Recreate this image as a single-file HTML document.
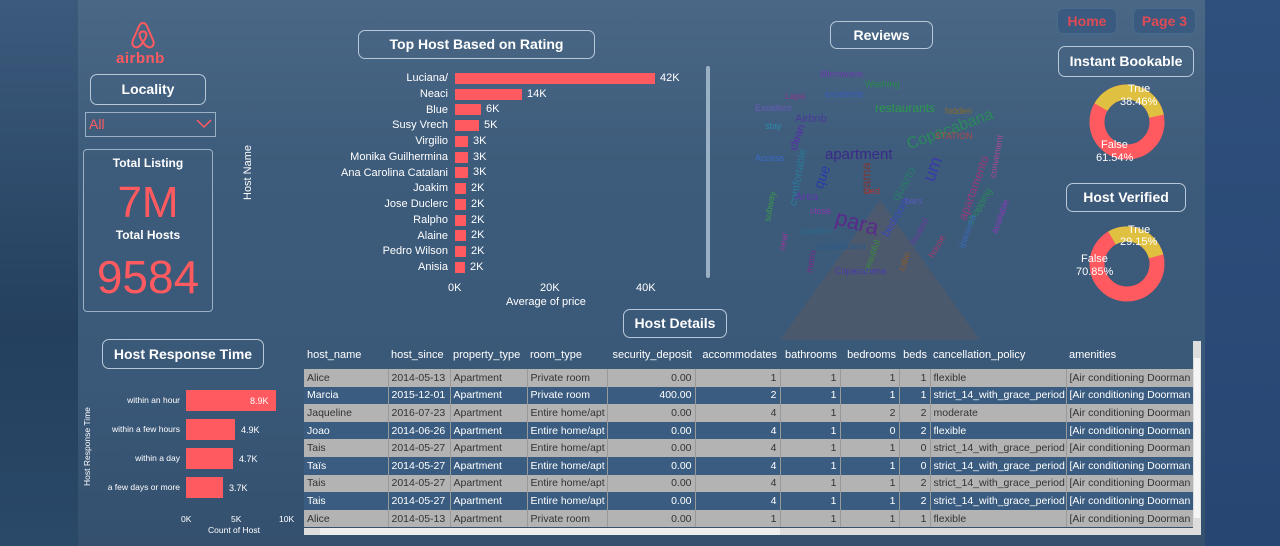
<!DOCTYPE html>
<html><head><meta charset="utf-8"><style>
*{margin:0;padding:0;box-sizing:border-box}
body{width:1280px;height:546px;overflow:hidden;font-family:"Liberation Sans",sans-serif;background:#2c4a70;position:relative;color:#fff}
.a{position:absolute}
.btn{position:absolute;border:1px solid #b8c8d8;border-radius:7px;font-weight:bold;text-align:center;color:#fff}
.red{color:#ff5a5f}
table{border-collapse:collapse;font-size:10.5px}
td{height:17.6px;padding:0 3px;border-right:1px solid #999;white-space:nowrap;overflow:hidden}
tr.g td{background:#b3b3b3;color:#333}
tr.b td{background:#3a5c80;color:#fff}
.r{text-align:right}
.wc span{position:absolute;font-size:9px;white-space:nowrap;line-height:1}
</style></head><body>
<div class="a" style="left:0;top:0;width:78px;height:546px;background:linear-gradient(#3c5a7c,#24405e 60%,#2a4868)"></div>
<div class="a" style="left:78px;top:0;width:1127px;height:546px;background:linear-gradient(#4a6886,#3d5b7a 30%,#3a5878 70%,#34506e)"></div>
<div class="a" style="left:1205px;top:0;width:75px;height:546px;background:linear-gradient(#2f4f7c,#284672)"></div>
<div class="a" style="left:780px;top:200px;width:200px;height:140px;background:#6a5a5a;opacity:.35;clip-path:polygon(50% 0,100% 100%,0 100%)"></div>

<!-- logo -->
<svg class="a" style="left:130px;top:20px" width="26" height="30" viewBox="0 0 26 30"><path d="M13 3C10 3 9 6 7 11L3 20C1 25 4 28 8 27C10 26 12 24 13 22C14 24 16 26 18 27C22 28 25 25 23 20L19 11C17 6 16 3 13 3ZM13 22C10 18 9 15 10 13C11 11 15 11 16 13C17 15 16 18 13 22Z" fill="none" stroke="#ff5a5f" stroke-width="2"/></svg>
<div class="a red" style="left:116px;top:50px;font-size:15px;font-weight:bold;letter-spacing:.5px">airbnb</div>
<div class="btn" style="left:90px;top:74px;width:116px;height:31px;line-height:29px;font-size:14px">Locality</div>
<div class="a" style="left:85px;top:112px;width:131px;height:25px;border:1px solid #9ab0c4"></div>
<div class="a red" style="left:89px;top:116px;font-size:14px">All</div>
<svg class="a" style="left:196px;top:119px" width="16" height="10"><path d="M1 1L8 8L15 1" fill="none" stroke="#ff5a5f" stroke-width="1.5"/></svg>
<div class="a" style="left:83px;top:149px;width:130px;height:163px;border:1px solid #9ab0c4;border-radius:4px"></div>
<div class="a" style="left:83px;top:156px;width:130px;text-align:center;font-size:12px;font-weight:bold">Total Listing</div>
<div class="a red" style="left:83px;top:178px;width:130px;text-align:center;font-size:44px">7M</div>
<div class="a" style="left:83px;top:228px;width:130px;text-align:center;font-size:12px;font-weight:bold">Total Hosts</div>
<div class="a red" style="left:83px;top:250px;width:130px;text-align:center;font-size:46px">9584</div>
<div class="a" style="left:242px;top:200px;transform:rotate(-90deg);transform-origin:0 0;font-size:11px">Host Name</div>

<!-- top host chart -->
<div class="btn" style="left:358px;top:30px;width:237px;height:29px;line-height:27px;font-size:14px">Top Host Based on Rating</div>
<div class="a" style="left:300px;top:71px;width:148px;text-align:right;font-size:11px;line-height:15.75px">Luciana/<br>Neaci<br>Blue<br>Susy Vrech<br>Virgilio<br>Monika Guilhermina<br>Ana Carolina Catalani<br>Joakim<br>Jose Duclerc<br>Ralpho<br>Alaine<br>Pedro Wilson<br>Anisia</div>
<div class="a" style="left:455px;top:73px;width:200px;height:11px;background:#ff5a5f"></div><div class="a" style="left:660px;top:72px;font-size:11px">42K</div>
<div class="a" style="left:455px;top:89px;width:67px;height:11px;background:#ff5a5f"></div><div class="a" style="left:527px;top:88px;font-size:11px">14K</div>
<div class="a" style="left:455px;top:104px;width:26px;height:11px;background:#ff5a5f"></div><div class="a" style="left:486px;top:103px;font-size:11px">6K</div>
<div class="a" style="left:455px;top:120px;width:24px;height:11px;background:#ff5a5f"></div><div class="a" style="left:484px;top:119px;font-size:11px">5K</div>
<div class="a" style="left:455px;top:136px;width:13px;height:11px;background:#ff5a5f"></div><div class="a" style="left:473px;top:135px;font-size:11px">3K</div>
<div class="a" style="left:455px;top:152px;width:13px;height:11px;background:#ff5a5f"></div><div class="a" style="left:473px;top:151px;font-size:11px">3K</div>
<div class="a" style="left:455px;top:167px;width:13px;height:11px;background:#ff5a5f"></div><div class="a" style="left:473px;top:166px;font-size:11px">3K</div>
<div class="a" style="left:455px;top:183px;width:11px;height:11px;background:#ff5a5f"></div><div class="a" style="left:471px;top:182px;font-size:11px">2K</div>
<div class="a" style="left:455px;top:199px;width:11px;height:11px;background:#ff5a5f"></div><div class="a" style="left:471px;top:198px;font-size:11px">2K</div>
<div class="a" style="left:455px;top:215px;width:11px;height:11px;background:#ff5a5f"></div><div class="a" style="left:471px;top:214px;font-size:11px">2K</div>
<div class="a" style="left:455px;top:230px;width:11px;height:11px;background:#ff5a5f"></div><div class="a" style="left:471px;top:229px;font-size:11px">2K</div>
<div class="a" style="left:455px;top:246px;width:11px;height:11px;background:#ff5a5f"></div><div class="a" style="left:471px;top:245px;font-size:11px">2K</div>
<div class="a" style="left:455px;top:262px;width:10px;height:11px;background:#ff5a5f"></div><div class="a" style="left:470px;top:261px;font-size:11px">2K</div>
<div class="a" style="left:448px;top:282px;font-size:11px">0K</div>
<div class="a" style="left:540px;top:282px;font-size:11px">20K</div>
<div class="a" style="left:636px;top:282px;font-size:11px">40K</div>
<div class="a" style="left:506px;top:296px;font-size:11px">Average of price</div>
<div class="a" style="left:706px;top:66px;width:4px;height:212px;background:#9ab0c4;border-radius:2px"></div>

<!-- reviews -->
<div class="btn" style="left:830px;top:21px;width:103px;height:28px;line-height:26px;font-size:14px">Reviews</div>
<div class="a wc" style="left:755px;top:62px;width:260px;height:225px">
<span style="left:65px;top:8px;color:#6a3aaa">Microwave</span>
<span style="left:110px;top:18px;color:#2a8a4a">Washing</span>
<span style="left:30px;top:30px;color:#8a3a8a">Lapa</span>
<span style="left:70px;top:28px;color:#3a5aba">excelente</span>
<span style="left:120px;top:40px;font-size:12px;color:#2a9a4a">restaurants</span>
<span style="left:0px;top:42px;color:#6a5aba">Excellent</span>
<span style="left:190px;top:45px;color:#8a6a2a">hidden</span>
<span style="left:40px;top:52px;font-size:11px;color:#4a3a9a">Airbnb</span>
<span style="left:150px;top:60px;font-size:16px;color:#2a8a5a;transform:rotate(-20deg)">Copacabana</span>
<span style="left:70px;top:85px;font-size:15px;color:#3a2a8a">apartment</span>
<span style="left:0px;top:92px;color:#3a6aca">Access</span>
<span style="left:30px;top:70px;font-size:11px;color:#5a2aaa;transform:rotate(-70deg)">clean</span>
<span style="left:15px;top:110px;font-size:11px;color:#2a7a9a;transform:rotate(-80deg)">comfortable</span>
<span style="left:55px;top:108px;font-size:14px;color:#2a3aaa;transform:rotate(-70deg)">que</span>
<span style="left:95px;top:110px;font-size:13px;color:#7a3a3a;transform:rotate(-90deg)">cama</span>
<span style="left:130px;top:115px;font-size:13px;color:#2a7a6a;transform:rotate(-60deg)">quarto</span>
<span style="left:165px;top:98px;font-size:18px;color:#3a3aaa;transform:rotate(-70deg)">um</span>
<span style="left:185px;top:120px;font-size:12px;color:#9a3a7a;transform:rotate(-70deg)">apartamento</span>
<span style="left:220px;top:90px;color:#aa4a9a;transform:rotate(-80deg)">convenient</span>
<span style="left:205px;top:140px;font-size:10px;color:#2a8a5a;transform:rotate(-60deg)">shopping</span>
<span style="left:228px;top:150px;color:#8a3aba;transform:rotate(-70deg)">available</span>
<span style="left:0px;top:140px;color:#3a9a4a;transform:rotate(-80deg)">subway</span>
<span style="left:40px;top:130px;font-size:11px;color:#5a3aaa">Area</span>
<span style="left:55px;top:145px;color:#8a3aaa">close</span>
<span style="left:80px;top:150px;font-size:22px;color:#5a2a8a;transform:rotate(15deg)">para</span>
<span style="left:45px;top:165px;color:#2a6a8a">quarters</span>
<span style="left:120px;top:150px;font-size:11px;color:#3a4aba;transform:rotate(-60deg)">bedroom</span>
<span style="left:150px;top:165px;color:#6a3a9a;transform:rotate(-60deg)">located</span>
<span style="left:170px;top:180px;color:#aa3a6a;transform:rotate(-60deg)">house</span>
<span style="left:60px;top:180px;color:#2a5a8a">Copacabana</span>
<span style="left:20px;top:175px;color:#9a3a9a;transform:rotate(-80deg)">near</span>
<span style="left:100px;top:190px;color:#3a8a3a;transform:rotate(-70deg)">beautiful</span>
<span style="left:140px;top:195px;color:#8a5a2a;transform:rotate(-70deg)">cabo</span>
<span style="left:80px;top:205px;color:#4a3aaa">Copacabana</span>
<span style="left:110px;top:125px;color:#aa3a3a">bed</span>
<span style="left:150px;top:135px;color:#5a5aba">bars</span>
<span style="left:180px;top:70px;color:#aa4a4a">STATION</span>
<span style="left:10px;top:60px;color:#2a8aaa">stay</span>
<span style="left:45px;top:195px;color:#7a2a8a;transform:rotate(-80deg)">metro</span>
<span style="left:195px;top:165px;color:#3a6aba;transform:rotate(-70deg)">Ipanema</span>
</div>

<!-- top-right -->
<div class="a" style="left:1057px;top:8px;width:60px;height:26px;border:1px solid #4a6a8a;border-radius:6px;color:#e04a55;font-weight:bold;font-size:14px;text-align:center;line-height:24px;background:#3a5a80">Home</div>
<div class="a" style="left:1133px;top:8px;width:63px;height:26px;border:1px solid #4a6a8a;border-radius:6px;color:#e04a55;font-weight:bold;font-size:14px;text-align:center;line-height:24px;background:#3a5a80">Page 3</div>
<div class="btn" style="left:1058px;top:46px;width:136px;height:31px;line-height:29px;font-size:14px">Instant Bookable</div>
<svg class="a" style="left:1087px;top:82px" width="80" height="80" viewBox="-40 -40 80 80">
<circle r="30" fill="none" stroke="#ff5a5f" stroke-width="15"/>
<circle r="30" fill="none" stroke="#e0c040" stroke-width="15" stroke-dasharray="72.5 200" transform="rotate(-150)"/>
</svg>
<div class="a" style="left:1128px;top:83px;font-size:11px">True</div>
<div class="a" style="left:1120px;top:96px;font-size:11px">38.46%</div>
<div class="a" style="left:1101px;top:139px;font-size:11px">False</div>
<div class="a" style="left:1096px;top:152px;font-size:11px">61.54%</div>
<div class="btn" style="left:1066px;top:183px;width:120px;height:29px;line-height:27px;font-size:14px">Host Verified</div>
<svg class="a" style="left:1087px;top:224px" width="80" height="80" viewBox="-40 -40 80 80">
<circle r="30" fill="none" stroke="#ff5a5f" stroke-width="15"/>
<circle r="30" fill="none" stroke="#e0c040" stroke-width="15" stroke-dasharray="55 200" transform="rotate(-120)"/>
</svg>
<div class="a" style="left:1128px;top:224px;font-size:11px">True</div>
<div class="a" style="left:1120px;top:236px;font-size:11px">29.15%</div>
<div class="a" style="left:1081px;top:253px;font-size:11px">False</div>
<div class="a" style="left:1076px;top:266px;font-size:11px">70.85%</div>

<!-- response time -->
<div class="btn" style="left:102px;top:339px;width:162px;height:30px;line-height:28px;font-size:14px">Host Response Time</div>
<div class="a" style="left:82px;top:486px;transform:rotate(-90deg);transform-origin:0 0;font-size:8.5px">Host Response Time</div>
<div class="a" style="left:90px;top:386px;width:90px;text-align:right;font-size:8.5px;line-height:29px">within an hour<br>within a few hours<br>within a day<br>a few days or more</div>
<div class="a" style="left:186px;top:390px;width:90px;height:21px;background:#ff5a5f"></div><div class="a" style="left:250px;top:396px;font-size:9px">8.9K</div>
<div class="a" style="left:186px;top:419px;width:49px;height:21px;background:#ff5a5f"></div><div class="a" style="left:241px;top:425px;font-size:9px">4.9K</div>
<div class="a" style="left:186px;top:448px;width:47px;height:21px;background:#ff5a5f"></div><div class="a" style="left:239px;top:454px;font-size:9px">4.7K</div>
<div class="a" style="left:186px;top:477px;width:37px;height:21px;background:#ff5a5f"></div><div class="a" style="left:229px;top:483px;font-size:9px">3.7K</div>
<div class="a" style="left:181px;top:514px;font-size:8.5px">0K</div>
<div class="a" style="left:231px;top:514px;font-size:8.5px">5K</div>
<div class="a" style="left:279px;top:514px;font-size:8.5px">10K</div>
<div class="a" style="left:208px;top:525px;font-size:8.5px">Count of Host</div>

<!-- table -->
<div class="btn" style="left:623px;top:309px;width:104px;height:29px;line-height:27px;font-size:14px">Host Details</div>
<div class="a" style="left:304px;top:341px;width:889px;height:190px;overflow:hidden">
<table style="width:900px;table-layout:fixed">
<colgroup><col style="width:84px"><col style="width:62px"><col style="width:77px"><col style="width:80px"><col style="width:88px"><col style="width:85px"><col style="width:60px"><col style="width:59px"><col style="width:31px"><col style="width:136px"><col style="width:138px"></colgroup>
<tr style="height:28px"><td style="border:0;font-size:11px">host_name</td><td style="border:0;font-size:11px">host_since</td><td style="border:0;font-size:11px">property_type</td><td style="border:0;font-size:11px">room_type</td><td class="r" style="border:0;font-size:11px">security_deposit</td><td class="r" style="border:0;font-size:11px">accommodates</td><td class="r" style="border:0;font-size:11px">bathrooms</td><td class="r" style="border:0;font-size:11px">bedrooms</td><td class="r" style="border:0;font-size:11px">beds</td><td style="border:0;font-size:11px">cancellation_policy</td><td style="border:0;font-size:11px">amenities</td></tr>
<tr class="g"><td>Alice</td><td>2014-05-13</td><td>Apartment</td><td>Private room</td><td class="r">0.00</td><td class="r">1</td><td class="r">1</td><td class="r">1</td><td class="r">1</td><td>flexible</td><td>[Air conditioning Doorman Elevator</td></tr>
<tr class="b"><td>Marcia</td><td>2015-12-01</td><td>Apartment</td><td>Private room</td><td class="r">400.00</td><td class="r">2</td><td class="r">1</td><td class="r">1</td><td class="r">1</td><td>strict_14_with_grace_period</td><td>[Air conditioning Doorman Elevator</td></tr>
<tr class="g"><td>Jaqueline</td><td>2016-07-23</td><td>Apartment</td><td>Entire home/apt</td><td class="r">0.00</td><td class="r">4</td><td class="r">1</td><td class="r">2</td><td class="r">2</td><td>moderate</td><td>[Air conditioning Doorman Elevator</td></tr>
<tr class="b"><td>Joao</td><td>2014-06-26</td><td>Apartment</td><td>Entire home/apt</td><td class="r">0.00</td><td class="r">4</td><td class="r">1</td><td class="r">0</td><td class="r">2</td><td>flexible</td><td>[Air conditioning Doorman Elevator</td></tr>
<tr class="g"><td>Tais</td><td>2014-05-27</td><td>Apartment</td><td>Entire home/apt</td><td class="r">0.00</td><td class="r">4</td><td class="r">1</td><td class="r">1</td><td class="r">0</td><td>strict_14_with_grace_period</td><td>[Air conditioning Doorman Elevator</td></tr>
<tr class="b"><td>Taïs</td><td>2014-05-27</td><td>Apartment</td><td>Entire home/apt</td><td class="r">0.00</td><td class="r">4</td><td class="r">1</td><td class="r">1</td><td class="r">0</td><td>strict_14_with_grace_period</td><td>[Air conditioning Doorman Elevator</td></tr>
<tr class="g"><td>Tais</td><td>2014-05-27</td><td>Apartment</td><td>Entire home/apt</td><td class="r">0.00</td><td class="r">4</td><td class="r">1</td><td class="r">1</td><td class="r">2</td><td>strict_14_with_grace_period</td><td>[Air conditioning Doorman Elevator</td></tr>
<tr class="b"><td>Tais</td><td>2014-05-27</td><td>Apartment</td><td>Entire home/apt</td><td class="r">0.00</td><td class="r">4</td><td class="r">1</td><td class="r">1</td><td class="r">2</td><td>strict_14_with_grace_period</td><td>[Air conditioning Doorman Elevator</td></tr>
<tr class="g"><td>Alice</td><td>2014-05-13</td><td>Apartment</td><td>Private room</td><td class="r">0.00</td><td class="r">1</td><td class="r">1</td><td class="r">1</td><td class="r">1</td><td>flexible</td><td>[Air conditioning Doorman Elevator</td></tr>
</table></div>
<div class="a" style="left:304px;top:528px;width:889px;height:7px;background:#ddd"></div>
<div class="a" style="left:320px;top:528px;width:460px;height:7px;background:#eee"></div>
<div class="a" style="left:1193px;top:341px;width:8px;height:194px;background:#ddd"></div>
<div class="a" style="left:1194px;top:358px;width:6px;height:160px;background:#f4f4f4"></div>
</body></html>
